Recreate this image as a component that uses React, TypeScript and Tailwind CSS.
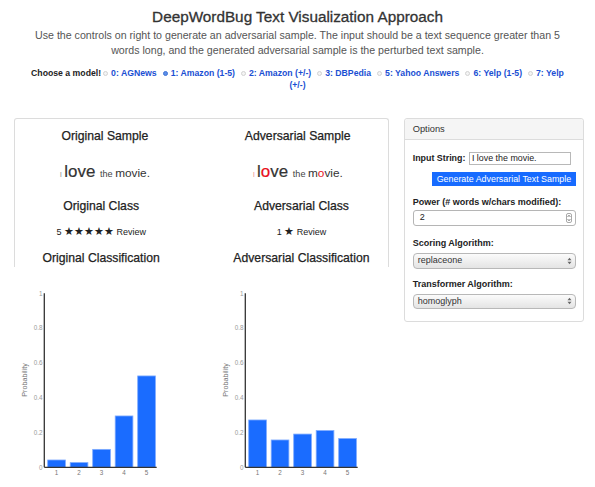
import React from "react";

function Radio({ checked }: { checked?: boolean }) {
  return (
    <span
      className={
        checked
          ? "inline-block w-[5px] h-[5px] rounded-full bg-[#5b8ee8] border border-[#3f74d6] mr-[3px] align-[0px]"
          : "inline-block w-[5px] h-[5px] rounded-full bg-[#f4f4f4] border border-[#d2d2d2] mr-[3px] align-[0px]"
      }
    />
  );
}

function Chart({ values }: { values: number[] }) {
  const ax = 44.3;
  const bottom = 182.3;
  const scale = 174;
  const ticks = [
    [1, "1"],
    [0.8, "0.8"],
    [0.6, "0.6"],
    [0.4, "0.4"],
    [0.2, "0.2"],
    [0, "0"],
  ] as const;
  return (
    <svg width="201" height="200" className="block">
      {ticks.map(([t, l]) => (
        <text
          key={l}
          x={42.6}
          y={bottom - t * scale + 2.3}
          textAnchor="end"
          fontSize="6.3"
          fill="#9a9a9a"
          fontFamily="Liberation Sans, Arial, sans-serif"
        >
          {l}
        </text>
      ))}
      <text
        transform="translate(26.6,95) rotate(-90)"
        textAnchor="middle"
        fontSize="7.2"
        fill="#777"
        fontFamily="Liberation Sans, Arial, sans-serif"
      >
        Probability
      </text>
      {values.map((v, i) => {
        const x = ax + 3.4 + i * 22.5;
        const h = v * scale;
        return (
          <g key={i}>
            <rect
              x={x}
              y={bottom - h}
              width={17.7}
              height={h}
              fill="#1a6cff"
              stroke="#7eabff"
              strokeWidth={0.8}
            />
            <text
              x={x + 8.85}
              y={bottom + 7.6}
              textAnchor="middle"
              fontSize="6.3"
              fill="#777"
              fontFamily="Liberation Sans, Arial, sans-serif"
            >
              {i + 1}
            </text>
          </g>
        );
      })}
      <line x1={ax} y1={8.3} x2={ax} y2={bottom} stroke="#333" strokeWidth={1.3} />
      <line x1={ax} y1={bottom} x2={156.7} y2={bottom} stroke="#333" strokeWidth={1.3} />
    </svg>
  );
}

function SelectArrows() {
  return (
    <svg width="5" height="8" viewBox="0 0 5 8" className="block">
      <path d="M0.5 3.2 L2.5 0.8 L4.5 3.2 Z" fill="#666" />
      <path d="M0.5 4.8 L2.5 7.2 L4.5 4.8 Z" fill="#666" />
    </svg>
  );
}

export default function App() {
  return (
    <div className="w-[595px] h-[487px] overflow-hidden bg-white font-['Liberation_Sans',Arial,sans-serif] text-[#333]">
      {/* Header */}
      <div className="text-center">
        <div className="pt-[7px] leading-[20px] text-[15.3px] text-[#333] [-webkit-text-stroke:0.3px]">
          DeepWordBug Text Visualization Approach
        </div>
        <div className="mt-[0.5px] leading-[15px] text-[10.64px] text-[#555]">
          Use the controls on right to generate an adversarial sample. The input should be a text sequence greater than 5
          <br />
          words long, and the generated adversarial sample is the perturbed text sample.
        </div>
        <div className="mt-[9.8px] leading-[12px] text-[8.7px] font-bold">
          <span className="text-[#222]">Choose a model!</span>
          <span className="ml-[2px]">
            <Radio />
            <span className="text-[#1a4fd3]">0: AGNews</span>
          </span>
          <span className="ml-[6px]">
            <Radio checked />
            <span className="text-[#1a4fd3]">1: Amazon (1-5)</span>
          </span>
          <span className="ml-[6px]">
            <Radio />
            <span className="text-[#1a4fd3]">2: Amazon (+/-)</span>
          </span>
          <span className="ml-[6px]">
            <Radio />
            <span className="text-[#1a4fd3]">3: DBPedia</span>
          </span>
          <span className="ml-[6px]">
            <Radio />
            <span className="text-[#1a4fd3]">5: Yahoo Answers</span>
          </span>
          <span className="ml-[6px]">
            <Radio />
            <span className="text-[#1a4fd3]">6: Yelp (1-5)</span>
          </span>
          <span className="ml-[6px]">
            <Radio />
            <span className="text-[#1a4fd3]">
              7: Yelp
              <br />
              (+/-)
            </span>
          </span>
        </div>
      </div>

      {/* Main */}
      <div className="flex items-start mt-[27px] pl-[14px]">
        {/* Left column */}
        <div className="w-[374.6px]">
          <div className="h-[148.4px] border-x border-t border-[#dcdcdc] rounded-t-[3px]">
            <div className="grid grid-cols-2 mx-[-6.5px] mt-[8.4px] leading-[16px] text-[12.2px] text-[#222] text-center [-webkit-text-stroke:0.25px]">
              <div>Original Sample</div>
              <div>Adversarial Sample</div>
            </div>
            <div className="grid grid-cols-2 mx-[-6.5px] mt-[20px]">
              <div className="flex justify-center items-baseline">
                <span className="text-[8px] leading-none text-[#999]">I&nbsp;</span>
                <span className="text-[16.9px] leading-none text-[#333] [-webkit-text-stroke:0.2px]">love&nbsp;</span>
                <span className="text-[9.1px] leading-none text-[#444]">the&nbsp;</span>
                <span className="text-[11.8px] leading-none text-[#333]">movie.</span>
              </div>
              <div className="flex justify-center items-baseline">
                <span className="text-[8px] leading-none text-[#f39a9a]">I&nbsp;</span>
                <span className="text-[16.9px] leading-none text-[#333] [-webkit-text-stroke:0.2px]">
                  l<span className="text-[#e8101a]">o</span>ve&nbsp;
                </span>
                <span className="text-[9.1px] leading-none text-[#444]">the&nbsp;</span>
                <span className="text-[11.8px] leading-none text-[#333]">
                  m<span className="text-[#e8101a]">o</span>vie.
                </span>
              </div>
            </div>
            <div className="grid grid-cols-2 mx-[-14px] mt-[17.4px] leading-[16px] text-[12.2px] text-[#222] text-center [-webkit-text-stroke:0.25px]">
              <div>Original Class</div>
              <div>Adversarial Class</div>
            </div>
            <div className="grid grid-cols-2 mx-[-14px] mt-[10.7px] leading-[12px] text-[9px] text-[#222] text-center">
              <div>
                5 <span className="text-[11px]">★★★★★</span> Review
              </div>
              <div>
                1 <span className="text-[11px]">★</span> Review
              </div>
            </div>
            <div className="grid grid-cols-2 mx-[-14px] mt-[12px] leading-[16px] text-[12.2px] text-[#222] text-center [-webkit-text-stroke:0.25px]">
              <div>Original Classification</div>
              <div>Adversarial Classification</div>
            </div>
          </div>
          <div className="flex mx-[-14px] mt-[18.3px]">
            <div className="w-[201.3px]">
              <Chart values={[0.042, 0.027, 0.103, 0.295, 0.525]} />
            </div>
            <div className="w-[201.3px]">
              <Chart values={[0.272, 0.157, 0.191, 0.211, 0.165]} />
            </div>
          </div>
        </div>

        {/* Options panel */}
        <div className="ml-[15.7px] w-[179.4px] h-[204px] border border-[#dcdcdc] rounded-[3px]">
          <div className="h-[21px] bg-[#f5f5f5] border-b border-[#dcdcdc] rounded-t-[3px] pl-[7.4px] leading-[20px] text-[9.3px] text-[#333]">
            Options
          </div>
          <div className="px-[7.4px]">
            <div className="flex items-center mt-[11.4px] h-[13.3px]">
              <span className="text-[8.9px] font-bold text-[#222] leading-[12px] whitespace-nowrap">Input String:</span>
              <div className="ml-[4px] w-[101.7px] h-[13.3px] border border-[#b8b8b8] bg-white pl-[1.5px] text-[8.9px] leading-[11.3px] text-[#222]">
                I love the movie.
              </div>
            </div>
            <div className="mt-[7px] ml-[19.6px] w-[143.4px] h-[14.4px] bg-[#176bff] text-white text-[8.9px] leading-[14.4px] text-center whitespace-nowrap">
              Generate Adversarial Text Sample
            </div>
            <div className="mt-[10px] leading-[12px] text-[9px] font-bold text-[#222] whitespace-nowrap">
              Power (# words w/chars modified):
            </div>
            <div className="mt-[2px] ml-[0.6px] w-[162.4px] h-[15.3px] border border-[#b5b5b5] rounded-[3px] bg-white flex items-center justify-between pl-[5.5px] pr-[3px] text-[9px] text-[#222]">
              <span>2</span>
              <span className="w-[6px] h-[10px] border border-[#aaa] rounded-[2px] flex items-center justify-center">
                <svg width="4" height="8" viewBox="0 0 4 8" className="block">
                  <path d="M0.6 3 L2 1.2 L3.4 3" fill="none" stroke="#555" strokeWidth="0.7" />
                  <path d="M0.6 5 L2 6.8 L3.4 5" fill="none" stroke="#555" strokeWidth="0.7" />
                </svg>
              </span>
            </div>
            <div className="mt-[11.3px] leading-[12px] text-[9px] font-bold text-[#222]">Scoring Algorithm:</div>
            <div className="mt-[4px] ml-[0.6px] w-[162.4px] h-[15.7px] border border-[#b8b8b8] rounded-[4px] bg-gradient-to-b from-[#fbfbfb] to-[#e4e4e4] flex items-center justify-between pl-[3.5px] pr-[3px] text-[9px] text-[#333]">
              <span>replaceone</span>
              <SelectArrows />
            </div>
            <div className="mt-[9.3px] leading-[12px] text-[9px] font-bold text-[#222]">Transformer Algorithm:</div>
            <div className="mt-[3.7px] ml-[0.6px] w-[162.4px] h-[15.3px] border border-[#b8b8b8] rounded-[4px] bg-gradient-to-b from-[#fbfbfb] to-[#e4e4e4] flex items-center justify-between pl-[3.5px] pr-[3px] text-[9px] text-[#333]">
              <span>homoglyph</span>
              <SelectArrows />
            </div>
          </div>
        </div>
      </div>
    </div>
  );
}
